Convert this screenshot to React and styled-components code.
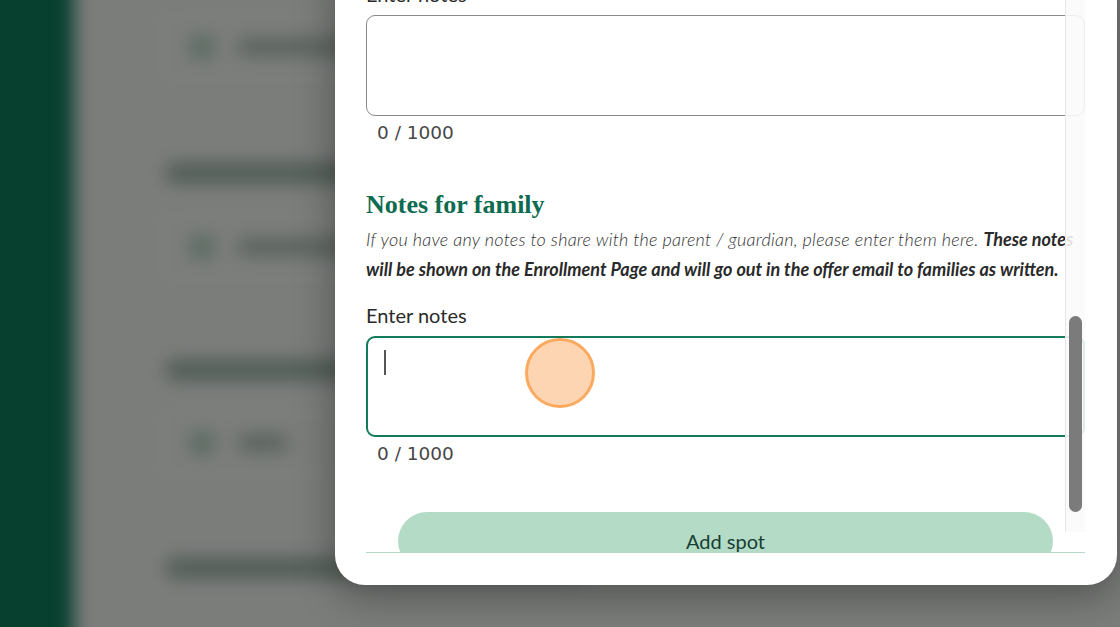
import React from "react";
import styled, { createGlobalStyle } from "styled-components";

const GlobalStyle = createGlobalStyle`
  html, body {
    margin: 0;
    padding: 0;
    width: 1120px;
    height: 627px;
    overflow: hidden;
    font-family: "Lato", "Liberation Sans", sans-serif;
  }
`;

const Page = styled.div`
  position: relative;
  width: 1120px;
  height: 627px;
  overflow: hidden;
  background: #7a7c7a;
`;

/* blurred page behind the dialog, bled past the edges so the blur has no halo */
const Backdrop = styled.div`
  display: flex;
  margin: -30px;
  height: calc(100% + 60px);
  filter: blur(9px);
`;

const Sidebar = styled.div`
  width: 104px;
  flex-shrink: 0;
  background: #08402f;
`;

const BackMain = styled.div`
  flex: 1;
  background: #7b7d7b;
  padding: 47px 0 0 91px;
  display: flex;
  flex-direction: column;
  align-items: flex-start;
`;

const BackHeading = styled.div`
  width: 420px;
  height: 20px;
  border-radius: 10px;
  background: #4f5b55;
  margin-top: ${({ $top }) => $top}px;
`;

const BackCard = styled.div`
  width: 420px;
  height: 60px;
  margin-top: ${({ $top }) => $top}px;
  border: 1px solid #8b8d8b;
  border-radius: 8px;
  display: flex;
  align-items: center;
  gap: 24px;
  padding-left: 24px;
  box-sizing: border-box;
`;

const BackDot = styled.div`
  width: 24px;
  height: 24px;
  border-radius: 50%;
  background: #56695e;
`;

const BackLine = styled.div`
  width: ${({ $w }) => $w}px;
  height: 16px;
  border-radius: 8px;
  background: #56615b;
`;

const Dialog = styled.div`
  position: absolute;
  left: 335px;
  top: -40px;
  width: 782px;
  height: 625px;
  box-sizing: border-box;
  background: #fff;
  border-radius: 30px;
  padding: 0 32px 32px 31px;
  box-shadow: 0 10px 40px rgba(0, 0, 0, 0.35);
`;

const ScrollArea = styled.div`
  position: relative;
  height: 593px;
  overflow: hidden;
  border-bottom: 1px solid #b4dbc6;
  box-sizing: border-box;
`;

const Content = styled.div`
  display: flex;
  flex-direction: column;
  padding-top: 22px;
`;

const Label = styled.div`
  font-size: 20px;
  line-height: 24px;
  color: #2b2b2b;
  margin-bottom: 9px;
`;

const Field = styled.div`
  height: 101px;
  box-sizing: border-box;
  border: ${({ $focused }) => ($focused ? "2px solid #137a5c" : "1px solid #8a8a8a")};
  border-radius: 9px;
  padding: ${({ $focused }) => ($focused ? "12px 16px" : "13px 17px")};
`;

const Caret = styled.span`
  display: block;
  width: 2px;
  height: 25px;
  background: #555;
`;

const Counter = styled.div`
  font-family: "DejaVu Sans", sans-serif;
  font-size: 18.5px;
  line-height: 24px;
  color: #474747;
  padding-left: 11px;
  margin-top: 5px;
`;

const Heading = styled.h2`
  margin: 45px 0 0;
  font-family: "Liberation Serif", serif;
  font-weight: 700;
  font-size: 26px;
  line-height: 30px;
  color: #0f6b4f;
`;

const Hint = styled.p`
  margin: 4px 0 19px;
  font-size: 18px;
  line-height: 30px;
  font-style: italic;
  font-weight: 300;
  letter-spacing: 0.24px;
  color: #333;
  white-space: nowrap;

  strong {
    font-weight: 700;
    letter-spacing: 0;
    color: #2a2a2a;
  }
`;

const AddButton = styled.button`
  margin: 46px 32px 0;
  height: 58px;
  flex-shrink: 0;
  border: none;
  border-radius: 29px;
  background: #b4dbc6;
  color: #163f33;
  font-family: "Lato", "Liberation Sans", sans-serif;
  font-size: 20px;
`;

const Track = styled.div`
  position: absolute;
  right: 0;
  top: 0;
  width: 20px;
  height: 572px;
  background: rgba(250, 250, 250, 0.88);
  border-left: 1px solid #e6e6e6;
  box-sizing: border-box;
`;

const Thumb = styled.div`
  position: absolute;
  left: 3px;
  top: 356px;
  width: 13px;
  height: 196px;
  border-radius: 7px;
  background: #7b7b7b;
`;

const ClickMark = styled.div`
  position: absolute;
  left: 525px;
  top: 338px;
  width: 70px;
  height: 70px;
  box-sizing: border-box;
  border-radius: 50%;
  background: #fdd5b3;
  border: 3px solid #fba95e;
`;

export default function App() {
  return (
    <>
      <GlobalStyle />
      <Page>
        <Backdrop>
          <Sidebar />
          <BackMain>
            <BackCard $top={0}>
              <BackDot />
              <BackLine $w={200} />
            </BackCard>
            <BackHeading $top={86} />
            <BackCard $top={34}>
              <BackDot />
              <BackLine $w={200} />
            </BackCard>
            <BackHeading $top={83} />
            <BackCard $top={33}>
              <BackDot />
              <BackLine $w={50} />
            </BackCard>
            <BackHeading $top={85} />
          </BackMain>
        </Backdrop>

        <Dialog>
          <ScrollArea>
            <Content>
              <Label>Enter notes</Label>
              <Field />
              <Counter>0 / 1000</Counter>

              <Heading>Notes for family</Heading>
              <Hint>
                If you have any notes to share with the parent / guardian, please enter them here.{" "}
                <strong>These notes</strong>
                <br />
                <strong>
                  will be shown on the Enrollment Page and will go out in the offer email to families as written.
                </strong>
              </Hint>

              <Label>Enter notes</Label>
              <Field $focused>
                <Caret />
              </Field>
              <Counter>0 / 1000</Counter>

              <AddButton>Add spot</AddButton>
            </Content>
            <Track>
              <Thumb />
            </Track>
          </ScrollArea>
        </Dialog>

        <ClickMark />
      </Page>
    </>
  );
}
